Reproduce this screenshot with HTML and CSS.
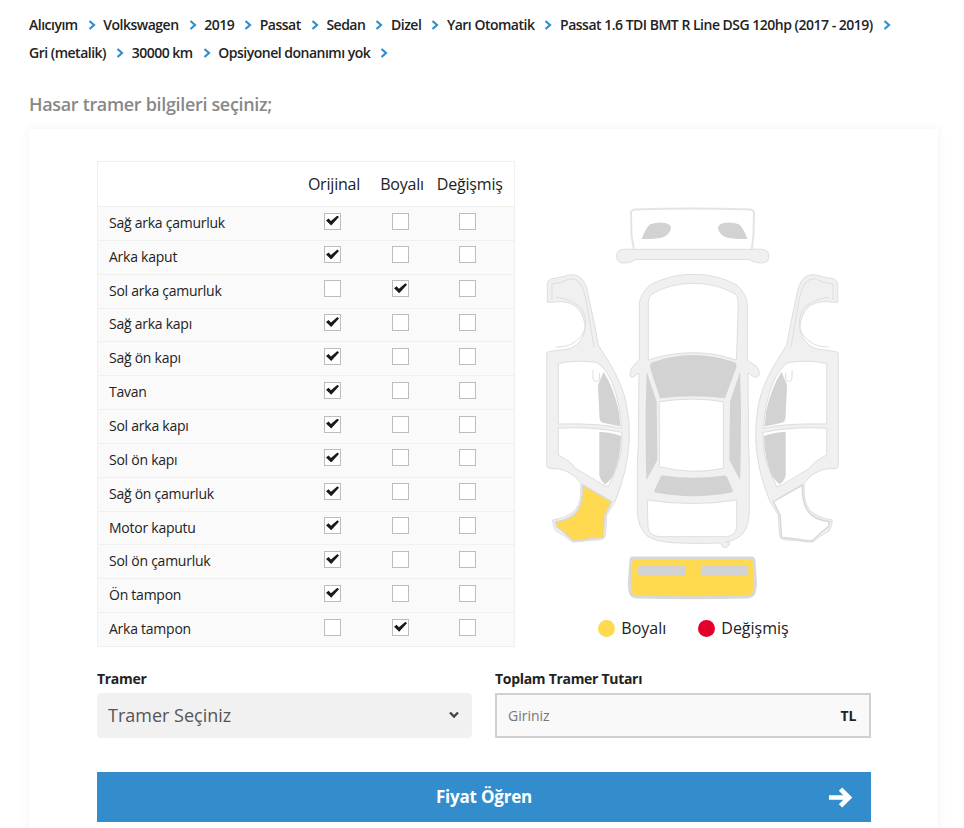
FILE: index.html
```html
<!DOCTYPE html>
<html lang="en">
    <head>
        <meta charset="UTF-8" />
        <meta name="viewport" content="width=device-width, initial-scale=1.0" />
        <title>Hasar tramer bilgileri</title>
        <link rel="stylesheet" href="styles.css">
    </head>

    <body>
        <ul class="crumbs">
            <li>Alıcıyım<svg class="crumbs__arrow" viewBox="0 0 8 10"><path d="M1.5 1l4.5 4-4.5 4" /></svg></li>
            <li>Volkswagen<svg class="crumbs__arrow" viewBox="0 0 8 10"><path d="M1.5 1l4.5 4-4.5 4" /></svg></li>
            <li>2019<svg class="crumbs__arrow" viewBox="0 0 8 10"><path d="M1.5 1l4.5 4-4.5 4" /></svg></li>
            <li>Passat<svg class="crumbs__arrow" viewBox="0 0 8 10"><path d="M1.5 1l4.5 4-4.5 4" /></svg></li>
            <li>Sedan<svg class="crumbs__arrow" viewBox="0 0 8 10"><path d="M1.5 1l4.5 4-4.5 4" /></svg></li>
            <li>Dizel<svg class="crumbs__arrow" viewBox="0 0 8 10"><path d="M1.5 1l4.5 4-4.5 4" /></svg></li>
            <li>Yarı Otomatik<svg class="crumbs__arrow" viewBox="0 0 8 10"><path d="M1.5 1l4.5 4-4.5 4" /></svg></li>
            <li>Passat 1.6 TDI BMT R Line DSG 120hp (2017 - 2019)<svg class="crumbs__arrow" viewBox="0 0 8 10"><path d="M1.5 1l4.5 4-4.5 4" /></svg></li>
            <li>Gri (metalik)<svg class="crumbs__arrow" viewBox="0 0 8 10"><path d="M1.5 1l4.5 4-4.5 4" /></svg></li>
            <li>30000 km<svg class="crumbs__arrow" viewBox="0 0 8 10"><path d="M1.5 1l4.5 4-4.5 4" /></svg></li>
            <li>Opsiyonel donanımı yok<svg class="crumbs__arrow" viewBox="0 0 8 10"><path d="M1.5 1l4.5 4-4.5 4" /></svg></li>
        </ul>

        <h2 class="page-title">Hasar tramer bilgileri seçiniz;</h2>

        <div class="card">
            <div class="damage">
                <table class="parts">
                    <thead>
                        <tr>
                            <th class="parts__name"></th>
                            <th>Orijinal</th>
                            <th>Boyalı</th>
                            <th>Değişmiş</th>
                        </tr>
                    </thead>
                    <tbody>
                        <tr>
                            <td class="parts__name">Sağ arka çamurluk</td>
                            <td><input type="checkbox" checked /></td>
                            <td><input type="checkbox" /></td>
                            <td><input type="checkbox" /></td>
                        </tr>
                        <tr>
                            <td class="parts__name">Arka kaput</td>
                            <td><input type="checkbox" checked /></td>
                            <td><input type="checkbox" /></td>
                            <td><input type="checkbox" /></td>
                        </tr>
                        <tr>
                            <td class="parts__name">Sol arka çamurluk</td>
                            <td><input type="checkbox" /></td>
                            <td><input type="checkbox" checked /></td>
                            <td><input type="checkbox" /></td>
                        </tr>
                        <tr>
                            <td class="parts__name">Sağ arka kapı</td>
                            <td><input type="checkbox" checked /></td>
                            <td><input type="checkbox" /></td>
                            <td><input type="checkbox" /></td>
                        </tr>
                        <tr>
                            <td class="parts__name">Sağ ön kapı</td>
                            <td><input type="checkbox" checked /></td>
                            <td><input type="checkbox" /></td>
                            <td><input type="checkbox" /></td>
                        </tr>
                        <tr>
                            <td class="parts__name">Tavan</td>
                            <td><input type="checkbox" checked /></td>
                            <td><input type="checkbox" /></td>
                            <td><input type="checkbox" /></td>
                        </tr>
                        <tr>
                            <td class="parts__name">Sol arka kapı</td>
                            <td><input type="checkbox" checked /></td>
                            <td><input type="checkbox" /></td>
                            <td><input type="checkbox" /></td>
                        </tr>
                        <tr>
                            <td class="parts__name">Sol ön kapı</td>
                            <td><input type="checkbox" checked /></td>
                            <td><input type="checkbox" /></td>
                            <td><input type="checkbox" /></td>
                        </tr>
                        <tr>
                            <td class="parts__name">Sağ ön çamurluk</td>
                            <td><input type="checkbox" checked /></td>
                            <td><input type="checkbox" /></td>
                            <td><input type="checkbox" /></td>
                        </tr>
                        <tr>
                            <td class="parts__name">Motor kaputu</td>
                            <td><input type="checkbox" checked /></td>
                            <td><input type="checkbox" /></td>
                            <td><input type="checkbox" /></td>
                        </tr>
                        <tr>
                            <td class="parts__name">Sol ön çamurluk</td>
                            <td><input type="checkbox" checked /></td>
                            <td><input type="checkbox" /></td>
                            <td><input type="checkbox" /></td>
                        </tr>
                        <tr>
                            <td class="parts__name">Ön tampon</td>
                            <td><input type="checkbox" checked /></td>
                            <td><input type="checkbox" /></td>
                            <td><input type="checkbox" /></td>
                        </tr>
                        <tr>
                            <td class="parts__name">Arka tampon</td>
                            <td><input type="checkbox" /></td>
                            <td><input type="checkbox" checked /></td>
                            <td><input type="checkbox" /></td>
                        </tr>
                    </tbody>
                </table>

                <div class="car">
                    <!-- viewBox is the page area of the drawing so the numbers are easy to check -->
                    <svg class="car__map" viewBox="540 200 305 400">
                        <defs>
                            <g id="side">
                                <path class="car__body" d="M547.3 302.3 L547.3 284 Q547.5 279.5 553 278.5 L562 277 Q572 273 578 276 Q584 279 587 289 L595 327 L598.3 345 L611.7 366.7 Q622 385 626 402 Q630 420 629.3 440 Q628 470 615 501.7 L606.7 515 L605.5 535 Q605 540 598 540 L588 540.5 Q578 542.5 572 542 Q566 536 556 531 Q552.5 526 552.7 520 Q566 518 573 512 Q580 506 580.8 495 L580.8 483.3 Q574 473 560 469 L549 468.3 Q546.7 468 546.7 465 L546.7 354 Q546.7 351.7 549 351.7 L560 350 Q573 350 580 341 Q586 333 585 325 Q583 311 574 305 Q564 300 552 302.3 Z" />
                                <path class="car__line" d="M552 300 L552 284 Q562 283 569 279 Q577 278 581 285 Q584 290 586 300 L594 347 M556 347 Q572 348 582 335 Q589 324 583 311 Q576 300 556 297" />
                                <path class="car__glass" d="M558.3 363.5 Q576 359.5 596.7 362.5 Q604 366 611.7 381.7 Q620 402 621.7 428.3 Q600 423 558.3 424 Z" />
                                <path class="car__window" d="M603.5 372 Q614 388 619 412 L620.5 426.5 L604 423 Q599.8 422 599.5 418 L598 385 Z" />
                                <path class="car__handle" d="M593 370 V378 Q593 381.5 596.5 381.5 Q599.5 381.5 599.5 378 V373" />
                                <path class="car__glass" d="M558.3 428.3 Q590 426 621.7 432.3 Q623 455 615 471.7 L608.3 486.7 L603.3 485 L575 468 Q572 462 558.3 455 Z" />
                                <path class="car__window" d="M599.3 431.7 Q610 432 621 436 Q621 458 613.3 475 Q609 482 605 484.3 Q600 480 599.3 475 Z" />
                            </g>
                            <path id="fender" d="M582.7 485 L611.7 501.7 L605 515 L603.3 537.5 Q596 538.5 588.3 539 Q578 541.5 572.5 540.5 Q564 532 556.5 526.5 L555.5 521.7 Q571 520 577 511 Q583 503 582.7 485 Z" />
                        </defs>

                        <!-- rear view -->
                        <path class="car__glass car__glass--thick" d="M631 213 Q631 210 635 209.5 Q692 207.500 750 209.5 Q754 210 754 213 L753.500 235 L751.700 250 L634 250 L631.500 235 Z" />
                        <path class="car__body" d="M634 249.300 H751.700 Q757 249 761 249.300 Q769 249.500 769 256 Q769 263 761 263 Q754 263 749.500 259.500 H636 Q631 263 624 263 Q616.700 263 616.700 256 Q616.700 249.500 624 249.300 Q629 249 634 249.300 Z" />
                        <path class="car__window" d="M641.700 239 Q645 229 650 224.300 Q657 222 663 222.800 Q671 223.500 671 228.300 Q670 234 664 237 Q655 239.500 641.700 239 Z" />
                        <path class="car__window" d="M747.500 239 Q744 229 739 224.300 Q732 222 726 222.800 Q718 223.500 718 228.300 Q719 234 725 237 Q734 239.500 747.500 239 Z" />

                        <!-- doors and fenders -->
                        <use href="#side" />
                        <use href="#side" transform="translate(1385 0) scale(-1 1)" />
                        <use class="car__fender car__fender--painted" href="#fender" />
                        <use class="car__fender" href="#fender" transform="translate(1385 0) scale(-1 1)" />

                        <!-- top view -->
                        <path class="car__body" d="M639.300 305 Q639.500 295 650 285 Q670 274.300 693.300 274.300 Q717 274.300 737 285 Q747 295 747.300 305 L747.300 360 Q753 364 757 367 Q760 371 759.300 375 Q757.500 378 754 377 L748 373 L748.500 445 L749.300 462 V511.700 Q749 525 743.300 533 Q736 541 725 542 L729.300 542 V545 Q727 548 724 547.500 Q721 546.500 720.700 543 Q693 544 670 542.500 Q655 541 647 536 Q638 527 637.300 511.700 V462 L638.300 445 L639 373 L633 377 Q629.500 378 630 373 Q631 367 636 363 L639.300 360 Z" />
                        <path class="car__glass" d="M648.300 303.300 Q649 296 652 294 Q670 283.300 693.300 283.300 Q717 283.300 735 294 Q738 296 738.300 303.300 L736.500 360 Q715 352.700 693.300 352.700 Q670 352.700 648.300 360 Z" />
                        <path class="car__window" d="M650 366 Q650 363.500 652 362.500 Q672 355 693.300 355 Q715 355 735 362.500 Q737 364 736.500 367 L725 398.300 Q693.300 394 660 398.300 L650.700 370 Z" />
                        <path class="car__window" d="M646.700 371.700 L656.700 401.700 L657.300 460 L646.700 480 Q645.500 470 645.700 405 Z" />
                        <path class="car__window" d="M740 371.700 L730 401.700 L729.300 460 L740 480 Q741 470 741 405 Z" />
                        <path class="car__glass" d="M659.300 401.700 Q693.300 396.500 723.300 401.700 V468.300 Q693.300 475 659.300 466.700 Z" />
                        <path class="car__window" d="M663 475.500 Q693.300 480 724 475.500 Q726 475 727 477 L732.700 490 Q733 492.300 731 492.500 Q693.300 500 656 492.500 Q653.500 492 654.500 490 L660.500 477 Q661 475.500 663 475.500 Z" />
                        <path class="car__glass" d="M647.300 500 Q693.300 507 736.700 500 V527 Q736 536 726 536.700 H660 Q649 536 648 527 Z" />

                        <!-- front view -->
                        <path class="car__bumper" d="M632 558 H752 Q753.500 558 754 561 L755.300 580 Q755.800 588 754 593 Q752 597 746 597 Q692 598.500 638 597 Q632 597 630.500 593 Q629 588 629.500 580 L631 561 Q631 558 632 558 Z" />
                        <rect class="car__window" x="638" y="565.700" width="48" height="10" rx="3" />
                        <rect class="car__window" x="700.700" y="565.700" width="47.600" height="10" rx="3" />
                    </svg>

                    <div class="legend">
                        <span class="legend__item"><i class="legend__dot legend__dot--painted"></i>Boyalı</span>
                        <span class="legend__item"><i class="legend__dot legend__dot--changed"></i>Değişmiş</span>
                    </div>
                </div>
            </div>

            <form class="tramer">
                <div class="tramer__field">
                    <label for="tramer">Tramer</label>
                    <div class="tramer__select">
                        <select id="tramer">
                            <option>Tramer Seçiniz</option>
                        </select>
                        <svg class="tramer__chevron" viewBox="0 0 10 8"><path d="M1 1.500l4 4 4-4" /></svg>
                    </div>
                </div>
                <div class="tramer__field">
                    <label for="total">Toplam Tramer Tutarı</label>
                    <div class="tramer__input">
                        <input type="text" id="total" placeholder="Giriniz" />
                        <b>TL</b>
                    </div>
                </div>
                <button class="submit" type="button">
                    Fiyat Öğren
                    <svg class="submit__arrow" viewBox="0 0 24 20"><path d="M1.500 10h19M12.500 2l8 8-8 8" /></svg>
                </button>
            </form>
        </div>
    </body>
</html>
```

FILE: styles.css
```css
/* CSS Reset */
html {
    box-sizing: border-box;
    font-size: 16px;
}

*,
*:before,
*:after {
    box-sizing: inherit;
}

body,
h2,
ul {
    margin: 0;
    padding: 0;
    font-weight: normal;
}

ul {
    list-style: none;
}

body {
    height: 828px;
    padding: 11px 26px 0 29px;
    overflow: hidden;
    font-family: "Open Sans", "DejaVu Sans", sans-serif;
    color: #222;
    background: #fff;
}

.crumbs {
    display: flex;
    flex-wrap: wrap;
    font-size: 14px;
    font-weight: 600;
    letter-spacing: -0.5px;
    line-height: 28px;
}

.crumbs li {
    display: flex;
    align-items: center;
}

.crumbs__arrow {
    width: 8px;
    height: 10px;
    margin: 0 7.6px 0 10px;
    fill: none;
    stroke: #338dcd;
    stroke-width: 2.2;
}

.page-title {
    margin-top: 25px;
    font-size: 18px;
    font-weight: 600;
    letter-spacing: -0.33px;
    line-height: 24px;
    color: #888;
}

.card {
    margin-top: 13px;
    padding: 32px 67px 40px 68px;
    background: #fff;
    box-shadow: 0 0 10px rgba(0, 0, 0, 0.06);
}

.damage {
    display: flex;
}

.parts {
    width: 418px;
    border-collapse: collapse;
    border: 1px solid #f0f0f0;
    table-layout: fixed;
    flex: none;
}

.parts th {
    height: 45px;
    padding: 0;
    font-size: 16px;
    font-weight: normal;
    letter-spacing: -0.2px;
    text-align: center;
    background: #fff;
}

.parts th:last-child {
    padding-right: 8px;
}

.parts td {
    height: 33.85px;
    padding: 0;
    text-align: center;
    font-size: 14px;
    background: #fafafa;
    border-top: 1px solid #f0f0f0;
}

.parts td:last-child {
    padding-right: 13px;
}

.parts .parts__name {
    width: 200px;
    padding: 0 0 2px 11px;
    text-align: left;
    letter-spacing: -0.25px;
}

.parts th:nth-child(2) {
    width: 70px;
    padding-left: 3px;
}

.parts th:nth-child(3) {
    width: 66px;
    padding-left: 3px;
}

.parts input {
    appearance: none;
    position: relative;
    display: inline-block;
    width: 17px;
    height: 17px;
    margin: 0 0 5px;
    vertical-align: middle;
    background: #fff;
    border: 1px solid #bdbdbd;
}

.parts input:checked::after {
    content: "";
    position: absolute;
    top: 2px;
    left: 1px;
    width: 13px;
    height: 10px;
    background: #1a1a1a;
    clip-path: polygon(0 50%, 20% 30%, 38% 55%, 88% 0, 100% 15%, 40% 100%);
}

.car {
    width: 305px;
    margin: 39px 0 0 25px;
}

.car__map {
    display: block;
    width: 305px;
    height: 400px;
}

.car__body {
    fill: #f0f0f0;
    stroke: #dedede;
}

.car__glass {
    fill: #fff;
    stroke: #dedede;
}

.car__glass--thick {
    stroke: #e4e4e4;
    stroke-width: 2;
}

.car__window {
    fill: #d2d2d2;
}

.car__line,
.car__handle {
    fill: none;
    stroke: #dedede;
}

.car__fender {
    fill: #fff;
    stroke: #d8d8d8;
    stroke-width: 1.5;
}

.car__fender--painted {
    fill: #ffd94f;
}

.car__bumper {
    fill: #ffd94f;
    stroke: #d8d8d8;
    stroke-width: 3;
}

.legend {
    display: flex;
    justify-content: center;
    gap: 32px;
    margin-top: 17px;
    padding-left: 2px;
    font-size: 16px;
    line-height: 22px;
}

.legend__item {
    display: flex;
    align-items: center;
    gap: 6px;
}

.legend__dot {
    width: 17px;
    height: 17px;
    border-radius: 50%;
}

.legend__dot--painted {
    background: #ffd94f;
}

.legend__dot--changed {
    background: #e4002b;
}

.tramer {
    display: grid;
    grid-template-columns: 375px 1fr;
    column-gap: 23px;
    margin-top: 22px;
}

.tramer label {
    display: block;
    margin-bottom: 4px;
    font-size: 14px;
    font-weight: 700;
    letter-spacing: -0.3px;
    line-height: 20px;
}

.tramer__select {
    position: relative;
}

.tramer__select select {
    appearance: none;
    display: block;
    width: 100%;
    height: 45px;
    padding: 0 11px;
    font-family: inherit;
    font-size: 18px;
    color: #555;
    background: #f1f1f1;
    border: 0;
    border-radius: 4px;
}

.tramer__chevron {
    position: absolute;
    top: 18px;
    right: 13px;
    width: 10px;
    height: 8px;
    fill: none;
    stroke: #444;
    stroke-width: 2.4;
}

.tramer__input {
    display: flex;
    align-items: center;
    height: 45px;
    padding: 0 13px 0 9px;
    font-size: 14px;
    letter-spacing: -0.3px;
    background: #f9f9f9;
    border: 2px solid #d0d0d0;
}

.tramer__input input {
    flex: 1;
    min-width: 0;
    font-family: inherit;
    font-size: 14px;
    background: none;
    border: 0;
    outline: 0;
}

.tramer__input input::placeholder {
    color: #777;
}

.submit {
    grid-column: 1 / -1;
    position: relative;
    height: 50px;
    margin-top: 34px;
    font-family: inherit;
    font-size: 17px;
    font-weight: 700;
    letter-spacing: -0.2px;
    color: #fff;
    background: #338dcd;
    border: 0;
    cursor: pointer;
}

.submit__arrow {
    position: absolute;
    top: 15px;
    right: 18px;
    width: 26px;
    height: 21px;
    fill: none;
    stroke: #fff;
    stroke-width: 4.5;
}
```
